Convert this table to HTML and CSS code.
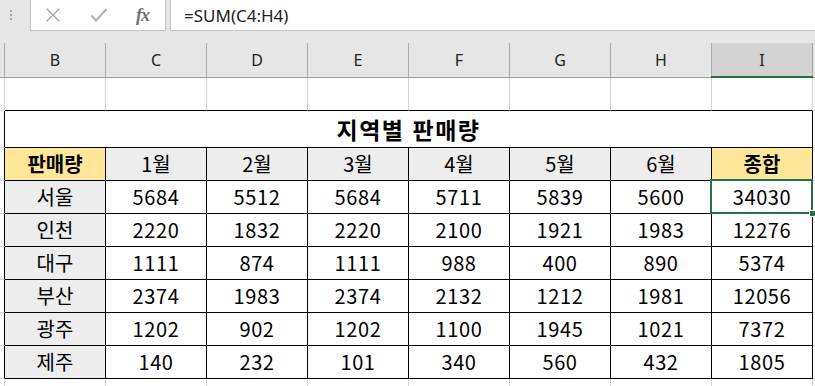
FILE: index.html
```html
<!DOCTYPE html>
<html lang="ko">
<head>
<meta charset="utf-8">
<title>지역별 판매량</title>
<link rel="stylesheet" href="styles.css">
</head>
<body>
<div class="app">
  <div class="fbar">
    <div class="grip"><span></span><span></span><span></span></div>
    <div class="tools">
      <span class="tool tool-x"><svg width="16" height="16" viewBox="0 0 16 16"><path d="M1.5 1.5 L14.5 14.5 M14.5 1.5 L1.5 14.5" stroke="#a8a8a8" stroke-width="1.4" fill="none"/></svg></span>
      <span class="tool tool-ok"><svg width="18" height="16" viewBox="0 0 18 16"><path d="M1.5 8.5 L6 13.5 L16.5 2" stroke="#b4b4b4" stroke-width="2.2" fill="none"/></svg></span>
      <span class="tool tool-fx">fx</span>
    </div>
    <div class="formula">=SUM(C4:H4)</div>
  </div>
  <div class="band"></div>
  <div class="colheads">
    <div class="ch corner"></div>
    <div class="ch">B</div>
    <div class="ch">C</div>
    <div class="ch">D</div>
    <div class="ch">E</div>
    <div class="ch">F</div>
    <div class="ch">G</div>
    <div class="ch">H</div>
    <div class="ch sel">I</div>
    <div class="ch rest"></div>
  </div>
  <div class="sheet">
    <!-- row 1 -->
    <div class="cell"></div>
    <div class="cell kb"></div><div class="cell kb"></div><div class="cell kb"></div><div class="cell kb"></div>
    <div class="cell kb"></div><div class="cell kb"></div><div class="cell kb"></div><div class="cell kb"></div>
    <div class="cell nr"></div>
    <!-- row 2 title -->
    <div class="cell kr"></div>
    <div class="cell kr kb title">지역별 판매량</div>
    <div class="cell nr"></div>
    <!-- row 3 header -->
    <div class="cell kr"></div>
    <div class="cell kr kb gold bold">판매량</div>
    <div class="cell kr kb gray">1월</div>
    <div class="cell kr kb gray">2월</div>
    <div class="cell kr kb gray">3월</div>
    <div class="cell kr kb gray">4월</div>
    <div class="cell kr kb gray">5월</div>
    <div class="cell kr kb gray">6월</div>
    <div class="cell kr kb gold bold">종합</div>
    <div class="cell nr"></div>
    <!-- 서울 -->
    <div class="cell kr"></div>
    <div class="cell kr kb gray">서울</div>
    <div class="cell kr kb num">5684</div><div class="cell kr kb num">5512</div><div class="cell kr kb num">5684</div>
    <div class="cell kr kb num">5711</div><div class="cell kr kb num">5839</div><div class="cell kr kb num">5600</div>
    <div class="cell kr kb num active">34030</div>
    <div class="cell nr"></div>
    <!-- 인천 -->
    <div class="cell kr"></div>
    <div class="cell kr kb gray">인천</div>
    <div class="cell kr kb num">2220</div><div class="cell kr kb num">1832</div><div class="cell kr kb num">2220</div>
    <div class="cell kr kb num">2100</div><div class="cell kr kb num">1921</div><div class="cell kr kb num">1983</div>
    <div class="cell kr kb num">12276</div>
    <div class="cell nr"></div>
    <!-- 대구 -->
    <div class="cell kr"></div>
    <div class="cell kr kb gray">대구</div>
    <div class="cell kr kb num">1111</div><div class="cell kr kb num">874</div><div class="cell kr kb num">1111</div>
    <div class="cell kr kb num">988</div><div class="cell kr kb num">400</div><div class="cell kr kb num">890</div>
    <div class="cell kr kb num">5374</div>
    <div class="cell nr"></div>
    <!-- 부산 -->
    <div class="cell kr"></div>
    <div class="cell kr kb gray">부산</div>
    <div class="cell kr kb num">2374</div><div class="cell kr kb num">1983</div><div class="cell kr kb num">2374</div>
    <div class="cell kr kb num">2132</div><div class="cell kr kb num">1212</div><div class="cell kr kb num">1981</div>
    <div class="cell kr kb num">12056</div>
    <div class="cell nr"></div>
    <!-- 광주 -->
    <div class="cell kr"></div>
    <div class="cell kr kb gray">광주</div>
    <div class="cell kr kb num">1202</div><div class="cell kr kb num">902</div><div class="cell kr kb num">1202</div>
    <div class="cell kr kb num">1100</div><div class="cell kr kb num">1945</div><div class="cell kr kb num">1021</div>
    <div class="cell kr kb num">7372</div>
    <div class="cell nr"></div>
    <!-- 제주 -->
    <div class="cell kr"></div>
    <div class="cell kr kb gray">제주</div>
    <div class="cell kr kb num">140</div><div class="cell kr kb num">232</div><div class="cell kr kb num">101</div>
    <div class="cell kr kb num">340</div><div class="cell kr kb num">560</div><div class="cell kr kb num">432</div>
    <div class="cell kr kb num">1805</div>
    <div class="cell nr"></div>
    <!-- row 10 -->
    <div class="cell"></div>
    <div class="cell"></div><div class="cell"></div><div class="cell"></div><div class="cell"></div>
    <div class="cell"></div><div class="cell"></div><div class="cell"></div><div class="cell"></div>
    <div class="cell nr"></div>
  </div>
</div>
</body>
</html>
```
FILE: styles.css
```css
html, body {
  margin: 0;
  padding: 0;
  background: #ffffff;
}
.app {
  width: 815px;
  height: 386px;
  overflow: hidden;
  background: #ffffff;
  font-family: "Noto Sans CJK KR", "Noto Sans", sans-serif;
  color: #000;
}
.fbar {
  display: flex;
  height: 31px;
  background: #e6e6e6;
  box-sizing: border-box;
}
.grip {
  width: 30px;
  box-sizing: border-box;
  padding: 10px 0 0 10px;
  display: flex;
  flex-direction: column;
  gap: 2px;
}
.grip span {
  width: 2px;
  height: 2px;
  background: #a4a4a4;
}
.tools {
  width: 136px;
  box-sizing: border-box;
  background: #fff;
  border: 1px solid #c6c6c6;
  border-top: 0;
  display: flex;
  align-items: center;
}
.tool {
  display: flex;
  align-items: center;
  justify-content: center;
  height: 30px;
}
.tool-x { margin-left: 14px; }
.tool-ok { margin-left: 29px; }
.tool-fx {
  margin-left: 28px;
  font-family: "Liberation Serif", serif;
  font-style: italic;
  font-weight: bold;
  font-size: 18px;
  color: #707070;
  letter-spacing: -1px;
}
.formula {
  flex: 1;
  margin-left: 4px;
  background: #fff;
  border-left: 1px solid #c6c6c6;
  border-bottom: 1px solid #c6c6c6;
  box-sizing: border-box;
  padding-left: 13px;
  display: flex;
  align-items: center;
  font-family: "Noto Sans", sans-serif;
  font-size: 17px;
  color: #222;
}
.band {
  height: 12px;
  background: #e6e6e6;
}
.colheads {
  display: grid;
  grid-template-columns: 5px repeat(8, 101px) 1fr;
  height: 34px;
  background: #e6e6e6;
  border-bottom: 1px solid #9e9e9e;
}
.ch {
  box-sizing: border-box;
  border-right: 1px solid #ababab;
  display: flex;
  align-items: center;
  justify-content: center;
  font-family: "Noto Sans", sans-serif;
  font-size: 16px;
  color: #222;
  position: relative;
}
.ch.rest { border-right: 0; }
.ch.sel {
  background: #d2d2d2;
  border-right-color: #a0a0a0;
}
.ch.sel::after {
  content: "";
  position: absolute;
  left: -1px;
  right: -1px;
  bottom: -1px;
  height: 2px;
  background: #217346;
}
.sheet {
  display: grid;
  grid-template-columns: 5px repeat(8, 101px) 1fr;
  grid-template-rows: 33px 37px repeat(7, 33px) 33px;
}
.cell {
  box-sizing: border-box;
  border-right: 1px solid #d4d4d4;
  border-bottom: 1px solid #d4d4d4;
  display: flex;
  align-items: center;
  justify-content: center;
  font-size: 20px;
  line-height: 1;
  position: relative;
}
.cell.num { letter-spacing: 0.6px; }
.cell.nr { border-right: 0; }
.cell.kr { border-right-color: #000; }
.cell.kb { border-bottom-color: #000; }
.title {
  grid-column: span 8;
  font-weight: bold;
  font-size: 23px;
  letter-spacing: 1.5px;
}
.gold { background: #ffe699; }
.gray { background: #ededed; }
.bold { font-weight: bold; }
.active::after {
  content: "";
  position: absolute;
  top: -2px;
  left: -2px;
  right: -1px;
  bottom: -1px;
  border: 2px solid #217346;
}
.active::before {
  content: "";
  position: absolute;
  right: -4px;
  bottom: -4px;
  width: 5px;
  height: 5px;
  background: #217346;
  border: 1px solid #fff;
  z-index: 2;
}
```
